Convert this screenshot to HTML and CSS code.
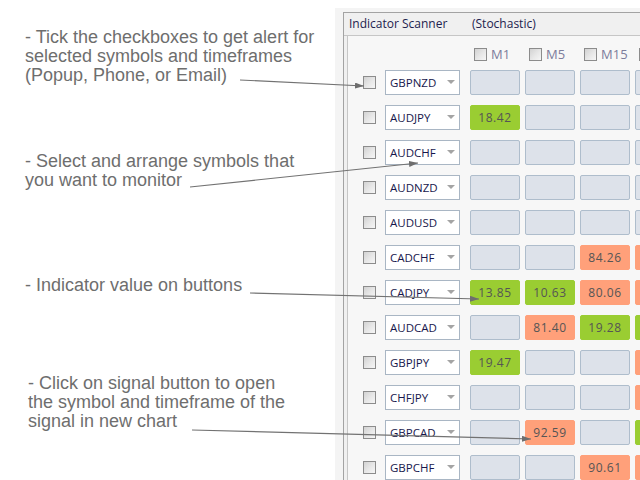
FILE: index.html
```html
<!DOCTYPE html>
<html>
<head>
<meta charset="utf-8">
<link rel="stylesheet" href="styles.css">
</head>
<body>
<div class="page">
  <div class="notes">
    <p class="note n1">- Tick the checkboxes to get alert for<br>selected symbols and timeframes<br>(Popup, Phone, or Email)</p>
    <p class="note n2">- Select and arrange symbols that<br>you want to monitor</p>
    <p class="note n3">- Indicator value on buttons</p>
    <p class="note n4">- Click on signal button to open<br>the symbol and timeframe of the<br>signal in new chart</p>
  </div>
  <div class="scanner">
    <div class="panel">
      <div class="title"><span class="t1">Indicator Scanner</span><span class="t2">(Stochastic)</span></div>
      <div class="body">
        <div class="tf-row">
          <div class="tf"><span class="cb"></span><span class="tf-label">M1</span></div>
          <div class="tf"><span class="cb"></span><span class="tf-label">M5</span></div>
          <div class="tf"><span class="cb"></span><span class="tf-label">M15</span></div>
          <div class="tf"><span class="cb"></span></div>
        </div>
        <div class="rows">
          <div class="row"><span class="cb"></span><div class="dd"><span class="sym">GBPNZD</span><span class="caret"></span></div><div class="btn"></div><div class="btn"></div><div class="btn"></div><div class="btn"></div></div>
          <div class="row"><span class="cb"></span><div class="dd"><span class="sym">AUDJPY</span><span class="caret"></span></div><div class="btn up">18.42</div><div class="btn"></div><div class="btn"></div><div class="btn"></div></div>
          <div class="row"><span class="cb"></span><div class="dd"><span class="sym">AUDCHF</span><span class="caret"></span></div><div class="btn"></div><div class="btn"></div><div class="btn"></div><div class="btn"></div></div>
          <div class="row"><span class="cb"></span><div class="dd"><span class="sym">AUDNZD</span><span class="caret"></span></div><div class="btn"></div><div class="btn"></div><div class="btn"></div><div class="btn"></div></div>
          <div class="row"><span class="cb"></span><div class="dd"><span class="sym">AUDUSD</span><span class="caret"></span></div><div class="btn"></div><div class="btn"></div><div class="btn"></div><div class="btn"></div></div>
          <div class="row"><span class="cb"></span><div class="dd"><span class="sym">CADCHF</span><span class="caret"></span></div><div class="btn"></div><div class="btn"></div><div class="btn dn">84.26</div><div class="btn dn"></div></div>
          <div class="row"><span class="cb"></span><div class="dd"><span class="sym">CADJPY</span><span class="caret"></span></div><div class="btn up">13.85</div><div class="btn up">10.63</div><div class="btn dn">80.06</div><div class="btn dn"></div></div>
          <div class="row"><span class="cb"></span><div class="dd"><span class="sym">AUDCAD</span><span class="caret"></span></div><div class="btn"></div><div class="btn dn">81.40</div><div class="btn up">19.28</div><div class="btn up"></div></div>
          <div class="row"><span class="cb"></span><div class="dd"><span class="sym">GBPJPY</span><span class="caret"></span></div><div class="btn up">19.47</div><div class="btn"></div><div class="btn"></div><div class="btn dn"></div></div>
          <div class="row"><span class="cb"></span><div class="dd"><span class="sym">CHFJPY</span><span class="caret"></span></div><div class="btn"></div><div class="btn"></div><div class="btn"></div><div class="btn dn"></div></div>
          <div class="row"><span class="cb"></span><div class="dd"><span class="sym">GBPCAD</span><span class="caret"></span></div><div class="btn"></div><div class="btn dn">92.59</div><div class="btn"></div><div class="btn up"></div></div>
          <div class="row"><span class="cb"></span><div class="dd"><span class="sym">GBPCHF</span><span class="caret"></span></div><div class="btn"></div><div class="btn"></div><div class="btn dn">90.61</div><div class="btn dn"></div></div>
        </div>
      </div>
    </div>
  </div>
  <svg class="arrows" width="640" height="480" viewBox="0 0 640 480">
    <defs>
      <marker id="ah" markerUnits="userSpaceOnUse" markerWidth="10" markerHeight="8" refX="9" refY="3" orient="auto">
        <path d="M0,0 L9,3 L0,6 z" fill="#6e6e6e"/>
      </marker>
    </defs>
    <line x1="240" y1="80" x2="364" y2="86" marker-end="url(#ah)"/>
    <line x1="190" y1="187" x2="418" y2="163" marker-end="url(#ah)"/>
    <line x1="250" y1="293" x2="479" y2="299" marker-end="url(#ah)"/>
    <line x1="192" y1="430" x2="531" y2="439" marker-end="url(#ah)"/>
  </svg>
</div>
</body>
</html>
```
FILE: styles.css
```css
html, body {
  margin: 0;
  padding: 0;
  background: #ffffff;
}
.page {
  position: relative;
  width: 640px;
  height: 480px;
  display: flex;
  overflow: hidden;
}
.notes {
  width: 310px;
  flex: none;
  padding-left: 25px;
  display: flex;
  flex-direction: column;
}
.note {
  margin: 0;
  font-family: "Liberation Sans", Arial, sans-serif;
  font-size: 18px;
  line-height: 19px;
  color: #6e6e6e;
  white-space: nowrap;
}
.n1 { margin-top: 28px; }
.n2 { margin-top: 67px; }
.n3 { margin-top: 86px; }
.n4 { margin-top: 79px; padding-left: 3px; }

.scanner {
  flex: 1;
  margin-top: 8px;
  background: #f4f4f4;
  padding: 4px 0 0 8px;
  overflow: hidden;
  min-width: 0;
}
.panel {
  border: 1px solid #a3a3a3;
  border-right: none;
  border-bottom: none;
  background: #f0f0f0;
  height: 480px;
  font-family: "Open Sans", "Noto Sans", sans-serif;
  font-size: 12px;
}
.title {
  height: 22px;
  line-height: 22px;
  padding-left: 5px;
  color: #22224e;
  border-bottom: 1px solid #c6c6c6;
  display: flex;
  white-space: nowrap;
}
.t1 { width: 123px; flex: none; }
.body {
  margin-left: 3px;
  border-left: 1px solid #c6c6c6;
  background: #f7f7f7;
  height: 460px;
  padding-left: 15px;
}
.tf-row {
  display: flex;
  height: 34px;
  padding-top: 12px;
  box-sizing: border-box;
  padding-left: 107px;
}
.tf {
  width: 55px;
  flex: none;
  padding-left: 4px;
  box-sizing: border-box;
  display: flex;
  align-items: flex-start;
  gap: 4px;
}
.tf-label {
  color: #7d7d9c;
  line-height: 13px;
  font-size: 13px;
}
.cb {
  width: 11px;
  height: 11px;
  flex: none;
  border: 1px solid #8c8c8c;
  background: linear-gradient(135deg, #d2d2d2 0%, #e8e8e8 55%, #f6f6f6 100%);
  display: block;
}
.rows {
  display: flex;
  flex-direction: column;
  gap: 10px;
}
.row {
  display: flex;
  align-items: center;
  height: 25px;
}
.row .cb {
  margin-right: 9px;
}
.dd {
  width: 75px;
  height: 25px;
  box-sizing: border-box;
  flex: none;
  border: 1px solid #a9b6c4;
  background: #ffffff;
  display: flex;
  align-items: center;
  padding-left: 4px;
  padding-right: 4px;
  margin-right: 10px;
  color: #17174c;
  font-size: 11.5px;
}
.sym { flex: 1; }
.caret {
  width: 0;
  height: 0;
  border-left: 4px solid transparent;
  border-right: 4px solid transparent;
  border-top: 4px solid #a4a4a4;
  margin-top: -2px;
}
.btn {
  width: 50px;
  height: 25px;
  box-sizing: border-box;
  flex: none;
  margin-right: 5px;
  border: 1px solid #aebdcc;
  border-radius: 2px;
  background: #dde2ea;
  color: #555555;
  display: flex;
  align-items: center;
  justify-content: center;
  letter-spacing: 0.6px;
  font-size: 12px;
}
.btn.up {
  background: #9acd32;
  border-color: #9acd32;
}
.btn.dn {
  background: #ffa07a;
  border-color: #ffa07a;
}
.arrows {
  position: absolute;
  left: 0;
  top: 0;
  pointer-events: none;
}
.arrows line {
  stroke: #727272;
  stroke-width: 1.2;
}
```
